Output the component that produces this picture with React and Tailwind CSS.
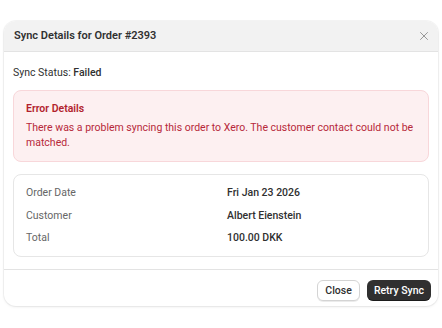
import { X } from "lucide-react";

const rows = [
  { label: "Order Date", value: "Fri Jan 23 2026" },
  { label: "Customer", value: "Albert Eienstein" },
  { label: "Total", value: "100.00 DKK" },
];

export default function App() {
  return (
    <div
      className="min-h-screen bg-white pt-[21px] px-[4px]"
      style={{ fontFamily: "Roboto, 'Noto Sans', sans-serif" }}
    >
      <div className="bg-white rounded-xl shadow-[0_0_0_1px_rgba(0,0,0,0.04),0_1px_3px_rgba(0,0,0,0.08)] overflow-hidden">
        <div className="flex items-center justify-between h-[31px] bg-[#f2f2f2] border-b border-[#e3e3e3] pl-[10px] pr-[7px]">
          <h1 className="text-[11px] font-semibold text-[#303030]">Sync Details for Order #2393</h1>
          <X className="w-[14px] h-[14px] text-[#8a8a8a]" strokeWidth={1.5} />
        </div>

        <div className="px-[9px] pt-[13px] pb-[12px]">
          <p className="text-[10.5px] text-[#303030] leading-[15px]">
            Sync Status: <span className="font-medium">Failed</span>
          </p>

          <div className="mt-[10px] bg-[#fdf0f1] border border-[#f8d7da] rounded-lg px-[12px] pt-[10px] pb-[11px]">
            <p className="text-[10.5px] font-semibold text-[#b21f2d] leading-[15px]">Error Details</p>
            <p className="mt-[4px] text-[10.5px] text-[#b7283a] leading-[15px]">
              There was a problem syncing this order to Xero. The customer contact could not be matched.
            </p>
          </div>

          <div className="mt-[12px] border border-[#e6e6e6] rounded-lg px-[12px] pt-[10px] pb-[11px] flex flex-col gap-[7.5px]">
            {rows.map((r) => (
              <div key={r.label} className="grid grid-cols-2 text-[10.5px] leading-[15px]">
                <span className="text-[#666666]">{r.label}</span>
                <span className="font-medium text-[#303030] pl-[6px]">{r.value}</span>
              </div>
            ))}
          </div>
        </div>

        <div className="border-t border-[#e3e3e3] flex justify-end gap-[7px] pl-[8px] pr-[7px] pt-[10px] pb-[5px]">
          <button className="h-[21px] px-[7px] rounded-md bg-white border border-[#d4d4d4] shadow-[0_1px_0_rgba(0,0,0,0.08)] text-[10.5px] font-medium text-[#303030]">
            Close
          </button>
          <button className="h-[21px] px-[7px] rounded-md bg-[#303030] shadow-[inset_0_-1px_0_rgba(0,0,0,0.4)] text-[10.5px] font-medium text-white">
            Retry Sync
          </button>
        </div>
      </div>
    </div>
  );
}
